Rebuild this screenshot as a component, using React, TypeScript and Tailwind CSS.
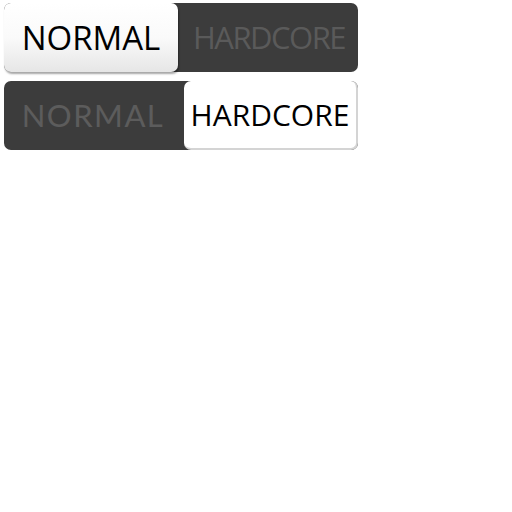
import React from 'react';

function Toggle({ hardcore }: { hardcore: boolean }) {
    return (
        <div className="flex w-[354px] h-[69px] rounded-[7px] bg-[#3c3c3c]">
            {hardcore ? (
                <>
                    <div className="w-[180px] flex items-center justify-center pr-[2px] text-[#5c5c5c] text-[31px] tracking-[1.5px] font-['Lato',sans-serif]">
                        NORMAL
                    </div>
                    <div className="flex-1 flex items-center justify-center rounded-[7px] bg-white border-r-2 border-b-2 border-[#d4d4d4] text-black text-[30px] font-['Open_Sans',sans-serif]">
                        HARDCORE
                    </div>
                </>
            ) : (
                <>
                    <div className="w-[174px] flex items-center justify-center rounded-[7px] bg-gradient-to-b from-white via-[#fafafa] to-[#e6e6e6] shadow-[1px_2px_2px_rgba(0,0,0,0.35)] text-black text-[33px] font-['Open_Sans',sans-serif]">
                        NORMAL
                    </div>
                    <div className="flex-1 flex items-center justify-center pl-[2px] text-[#5a5a5a] text-[31px] tracking-[-1.5px] font-['Open_Sans',sans-serif]">
                        HARDCORE
                    </div>
                </>
            )}
        </div>
    );
}

export default function App() {
    return (
        <div className="min-h-screen bg-white pt-[3px] pl-[4px] flex flex-col gap-[9px]">
            <Toggle hardcore={false} />
            <Toggle hardcore={true} />
        </div>
    );
}
